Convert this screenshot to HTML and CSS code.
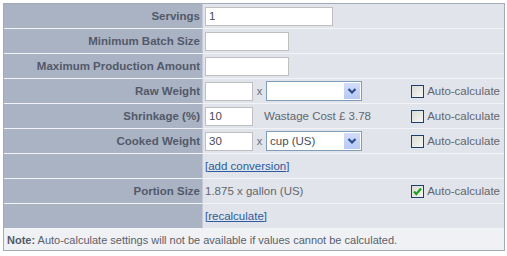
FILE: index.html
```html
<!DOCTYPE html>
<html>
<head>
<meta charset="utf-8">
<link rel="stylesheet" href="styles.css">
</head>
<body>
<table class="form">
  <tr>
    <th>Servings</th>
    <td><span class="input w128">1</span></td>
  </tr>
  <tr>
    <th>Minimum Batch Size</th>
    <td><span class="input w84"></span></td>
  </tr>
  <tr>
    <th>Maximum Production Amount</th>
    <td><span class="input w84"></span></td>
  </tr>
  <tr>
    <th>Raw Weight</th>
    <td>
      <div class="line">
        <span class="input w48"></span><span class="x">x</span>
        <span class="select"><span class="sel-text"></span><span class="arrow"><svg width="14" height="14" viewBox="0 0 14 14"><path d="M3.5 5 L7 8.5 L10.5 5" fill="none" stroke="#2d4d8f" stroke-width="2.2"/></svg></span></span>
        <span class="auto"><span class="cb"></span>Auto-calculate</span>
      </div>
    </td>
  </tr>
  <tr>
    <th>Shrinkage (%)</th>
    <td>
      <div class="line">
        <span class="input w48">10</span><span class="text wastage">Wastage Cost £ 3.78</span>
        <span class="auto"><span class="cb"></span>Auto-calculate</span>
      </div>
    </td>
  </tr>
  <tr>
    <th>Cooked Weight</th>
    <td>
      <div class="line">
        <span class="input w48">30</span><span class="x">x</span>
        <span class="select"><span class="sel-text">cup (US)</span><span class="arrow"><svg width="14" height="14" viewBox="0 0 14 14"><path d="M3.5 5 L7 8.5 L10.5 5" fill="none" stroke="#2d4d8f" stroke-width="2.2"/></svg></span></span>
        <span class="auto"><span class="cb"></span>Auto-calculate</span>
      </div>
    </td>
  </tr>
  <tr>
    <th></th>
    <td><a class="link" href="#">[add conversion]</a></td>
  </tr>
  <tr>
    <th>Portion Size</th>
    <td>
      <div class="line">
        <span class="text">1.875 x gallon (US)</span>
        <span class="auto"><span class="cb checked"><svg width="11" height="11" viewBox="0 0 11 11"><path d="M2 5.5 L4.3 8 L9 2.5" fill="none" stroke="#21a121" stroke-width="2.2"/></svg></span>Auto-calculate</span>
      </div>
    </td>
  </tr>
  <tr>
    <th></th>
    <td><a class="link" href="#">[recalculate]</a></td>
  </tr>
  <tr class="note">
    <td colspan="2"><b>Note:</b> Auto-calculate settings will not be available if values cannot be calculated.</td>
  </tr>
</table>
</body>
</html>
```

FILE: styles.css
```css
html, body {
  margin: 0;
  padding: 0;
  background: #ffffff;
}
body {
  padding: 3px;
  font-family: "Liberation Sans", Arial, sans-serif;
  font-size: 11px;
  color: #5a5f6b;
}
.form {
  width: 502px;
  border: 1px solid #a3abb9;
  border-collapse: separate;
  border-spacing: 0;
  background: #ffffff;
}
.form th,
.form td {
  height: 24px;
  padding: 0;
  border-bottom: 1px solid #f3f4f7;
  vertical-align: middle;
}
.form th {
  width: 196px;
  background: #aab3c3;
  color: #525969;
  font-weight: bold;
  font-size: 11.5px;
  text-align: right;
  padding-right: 2px;
  border-right: 1px solid #c4cad6;
}
.form td {
  background: #e1e4ea;
  padding-left: 2px;
}
.form tr.note td {
  height: 21px;
  background: #f0f1f4;
  border-bottom: none;
  padding-left: 3px;
  color: #5a5f6b;
}
.note b {
  color: #525969;
}
.line {
  display: flex;
  align-items: center;
}
.input {
  display: inline-block;
  box-sizing: border-box;
  height: 19px;
  line-height: 17px;
  border: 1px solid #bfbfbf;
  background: #ffffff;
  padding-left: 3px;
  font-size: 11.5px;
  color: #484c55;
  vertical-align: middle;
}
.w128 { width: 128px; }
.w84 { width: 84px; }
.w48 { width: 48px; }
.x {
  width: 13px;
  text-align: center;
  color: #666b77;
  font-size: 11px;
}
.select {
  display: inline-flex;
  align-items: center;
  box-sizing: border-box;
  width: 96px;
  height: 20px;
  border: 1px solid #7f9db9;
  background: #ffffff;
  font-size: 11.5px;
  color: #484c55;
}
.sel-text {
  flex: 1;
  padding-left: 3px;
}
.arrow {
  display: flex;
  align-items: center;
  justify-content: center;
  width: 16px;
  height: 16px;
  margin-right: 1px;
  background: linear-gradient(#d2ddf9, #b6c9f5);
}
.text {
  color: #62666f;
  font-size: 11.5px;
}
.wastage {
  margin-left: 11px;
}
.auto {
  margin-left: auto;
  display: flex;
  align-items: center;
  font-size: 11.5px;
  color: #62666f;
  padding-right: 4px;
}
.cb {
  display: inline-flex;
  align-items: center;
  justify-content: center;
  box-sizing: border-box;
  width: 13px;
  height: 13px;
  border: 1px solid #1c3f6e;
  background: linear-gradient(135deg, #dcdcd6, #f6f6f3);
  margin-right: 3px;
}
.link {
  color: #2d5a9e;
  text-decoration: underline;
  font-size: 11.5px;
}
```
